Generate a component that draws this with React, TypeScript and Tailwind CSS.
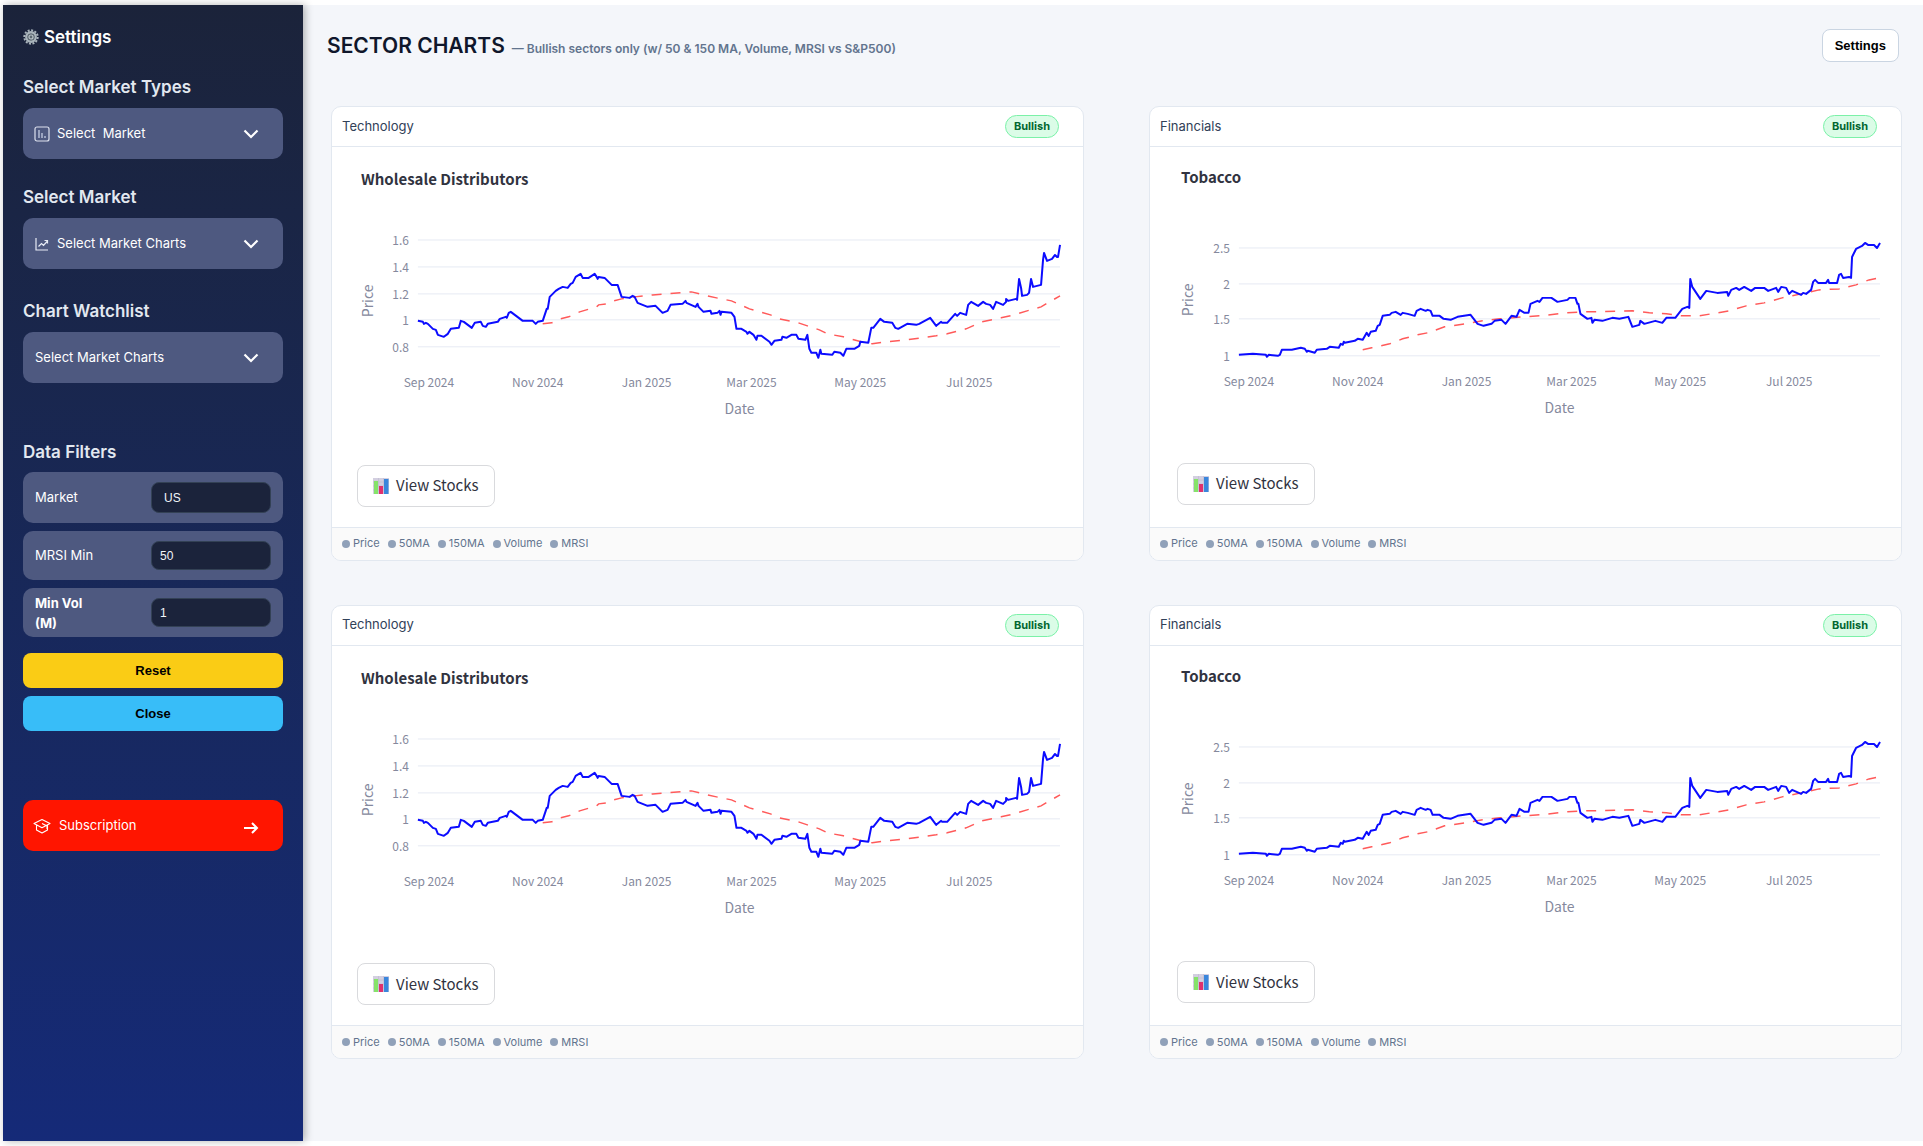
import React from "react";

type Pt = [number, number];
type Series = {
  title: string;
  sector: string;
  titleClass: string;
  buttonClass: string;
  ticks: { label: string; y: number }[];
  priceX: number;
  priceY: number;
  monthY: number;
  dateX: number;
  left: number;
  right: number;
  price: Pt[];
  ma: Pt[];
};

const WHOLESALE: Series = {
  title: "Wholesale Distributors",
  sector: "Technology",
  titleClass: "pt-5 pl-[29px]",
  buttonClass: "mt-7 mb-5 ml-[25px]",
  ticks: [
    { label: "1.6", y: 93 },
    { label: "1.4", y: 120 },
    { label: "1.2", y: 147 },
    { label: "1", y: 173 },
    { label: "0.8", y: 200 },
  ],
  priceX: 41,
  priceY: 154,
  monthY: 240,
  dateX: 408,
  left: 86,
  right: 729,
  price: [[86,174],[91,175],[92,177],[94,176],[96,177],[101,182],[104,183],[106,188],[112,190],[116,187],[119,182],[127,181],[129,174],[132,175],[140,181],[143,176],[149,175],[151,179],[154,180],[156,177],[166,175],[168,172],[174,170],[175,171],[177,166],[179,165],[191,174],[201,174],[204,177],[206,175],[211,174],[215,162],[216,162],[218,150],[224,144],[227,142],[231,140],[236,141],[239,137],[241,136],[244,130],[249,127],[251,131],[257,131],[263,127],[265,130],[266,132],[267,130],[273,131],[280,138],[286,138],[290,150],[298,151],[301,149],[303,150],[306,156],[316,160],[324,159],[331,166],[336,164],[339,158],[351,157],[354,154],[355,156],[364,160],[366,157],[367,160],[372,165],[379,164],[380,167],[386,166],[388,164],[389,168],[390,165],[400,166],[403,170],[405,182],[410,182],[415,185],[416,187],[418,185],[422,188],[425,193],[426,189],[430,189],[438,195],[440,198],[443,194],[450,193],[451,190],[455,191],[460,188],[465,188],[467,192],[474,193],[476,188],[478,202],[480,206],[485,206],[487,211],[489,203],[490,207],[501,208],[503,205],[509,206],[512,209],[515,202],[523,202],[528,199],[529,195],[537,196],[540,181],[542,181],[549,172],[553,175],[561,176],[564,181],[567,182],[576,177],[585,178],[588,177],[599,171],[605,179],[610,175],[611,176],[616,176],[624,167],[626,169],[629,166],[635,168],[637,158],[640,155],[647,159],[652,155],[655,157],[659,158],[662,162],[665,155],[672,158],[675,155],[675,152],[677,154],[685,152],[686,153],[688,132],[690,141],[691,149],[696,148],[698,146],[700,132],[702,140],[710,138],[712,113],[713,106],[716,114],[721,112],[724,108],[726,110],[727,110],[729,98]],
  ma: [[211,177],[220,176],[229,172],[237,170],[248,165],[265,160],[267,158],[275,157],[282,154],[290,152],[303,150],[321,148],[360,145],[368,147],[376,149],[385,151],[400,154],[418,162],[439,168],[448,172],[467,176],[476,179],[488,183],[496,187],[512,190],[530,195],[541,197],[555,195],[576,193],[605,189],[616,187],[635,182],[651,175],[670,171],[683,168],[696,164],[710,160],[715,157],[729,149]],
};

const TOBACCO: Series = {
  title: "Tobacco",
  sector: "Financials",
  titleClass: "pt-[18px] pl-[31px]",
  buttonClass: "mt-[26px] mb-[22px] ml-[27px]",
  ticks: [
    { label: "2.5", y: 101 },
    { label: "2", y: 137 },
    { label: "1.5", y: 172 },
    { label: "1", y: 209 },
  ],
  priceX: 43,
  priceY: 153,
  monthY: 239,
  dateX: 410,
  left: 89,
  right: 731,
  price: [[89,208],[103,207],[116,208],[117,210],[119,208],[128,209],[130,208],[132,203],[142,203],[151,201],[155,202],[157,205],[158,204],[165,206],[167,203],[177,202],[180,200],[189,201],[191,197],[193,198],[194,195],[195,196],[205,194],[208,192],[213,193],[217,186],[219,189],[221,185],[226,184],[228,179],[230,178],[233,169],[240,168],[242,166],[246,165],[251,168],[253,166],[258,167],[265,169],[267,164],[271,162],[276,164],[278,163],[281,164],[283,169],[290,169],[294,172],[301,173],[308,170],[321,168],[328,177],[334,179],[342,177],[345,174],[352,173],[356,177],[362,169],[367,170],[370,163],[375,166],[379,166],[381,157],[388,154],[390,155],[393,151],[402,151],[408,155],[418,153],[420,151],[426,151],[428,157],[429,157],[431,167],[438,172],[442,171],[443,176],[445,173],[453,174],[463,171],[470,172],[479,170],[483,180],[490,178],[491,174],[495,177],[506,174],[513,176],[517,171],[526,171],[533,162],[538,160],[540,161],[541,132],[543,140],[551,152],[557,144],[568,146],[578,145],[579,149],[582,143],[587,141],[590,143],[595,140],[602,144],[606,141],[615,141],[619,144],[627,141],[629,145],[632,140],[637,141],[640,147],[643,144],[652,148],[654,146],[657,147],[662,143],[664,135],[666,133],[669,136],[677,136],[679,133],[680,136],[688,136],[690,128],[692,127],[694,131],[700,130],[702,131],[703,110],[707,102],[713,99],[716,96],[719,98],[725,98],[728,101],[731,96]],
  ma: [[213,203],[222,201],[240,197],[253,192],[268,188],[278,186],[295,180],[315,177],[333,174],[350,172],[373,170],[390,169],[418,166],[437,165],[483,164],[500,166],[517,167],[533,169],[550,169],[580,164],[597,159],[615,156],[633,151],[652,147],[670,143],[690,142],[707,138],[720,133],[730,131]],
};

const MONTHS: [string, number][] = [
  ["Sep 2024", 97], ["Nov 2024", 206], ["Jan 2025", 315],
  ["Mar 2025", 420], ["May 2025", 529], ["Jul 2025", 638],
];

const toPoints = (pts: Pt[]) => pts.map((p) => p.join(",")).join(" ");

function Chart({ s }: { s: Series }) {
  return (
    <svg viewBox="0 60 752 230" className="block w-full" role="img" aria-label={`${s.title} price chart`}>
      {s.ticks.map((t) => (
        <g key={t.label}>
          <line x1={s.left} x2={s.right} y1={t.y} y2={t.y} stroke="#e6eaf3" strokeWidth="1" />
          <text x={s.left - 9} y={t.y + 5} textAnchor="end" fontSize="12" fill="#85899d">{t.label}</text>
        </g>
      ))}
      <text x={s.priceX} y={s.priceY} textAnchor="middle" fontSize="14" fill="#85899d" transform={`rotate(-90 ${s.priceX} ${s.priceY})`}>Price</text>
      {MONTHS.map(([m, x]) => (
        <text key={m} x={x + s.dateX - 408} y={s.monthY} textAnchor="middle" fontSize="12" fill="#85899d">{m}</text>
      ))}
      <text x={s.dateX} y={s.monthY + 27} textAnchor="middle" fontSize="14" fill="#85899d">Date</text>
      <polyline points={toPoints(s.ma)} fill="none" stroke="#ff5a5a" strokeWidth="1.5" strokeDasharray="10 9" />
      <polyline points={toPoints(s.price)} fill="none" stroke="#0c0cff" strokeWidth="2" strokeLinejoin="round" />
    </svg>
  );
}

function BarsEmoji() {
  return (
    <svg viewBox="0 0 16 16" className="size-4" aria-hidden="true">
      <rect width="16" height="16" fill="#d3cfe0" />
      <path d="M0 4h16M0 8h16M0 12h16M5.5 0v16M10.5 0v16" stroke="#bdb8cf" strokeWidth=".6" />
      <rect x="1" y="3" width="4" height="13" fill="#86e36a" />
      <rect x="6" y="8" width="4" height="8" fill="#e0306e" />
      <rect x="11" y="1" width="4.5" height="15" fill="#3a86dc" />
    </svg>
  );
}

function Gear() {
  return (
    <svg viewBox="0 0 16 16" className="size-4" aria-hidden="true" fill="none">
      <circle cx="8" cy="8" r="6.7" stroke="#a9b4bb" strokeWidth="2" strokeDasharray="2 1.5" />
      <circle cx="8" cy="8" r="4.6" stroke="#a9b4bb" strokeWidth="2.6" />
      <circle cx="8" cy="8" r="3.6" fill="#5c6870" />
      <circle cx="8" cy="8" r="2" stroke="#b9c3c9" strokeWidth="1.2" />
    </svg>
  );
}

function MarketIcon() {
  return (
    <svg viewBox="0 0 16 16" className="size-4" aria-hidden="true" fill="none" stroke="#dde2ee">
      <rect x="1" y="1" width="14" height="14" rx="2" strokeWidth="1.2" />
      <path d="M5 4v8M8 7v5M11 10v2" strokeWidth="1.6" stroke="#aeb7d0" />
    </svg>
  );
}

function TrendIcon() {
  return (
    <svg viewBox="0 0 16 16" className="size-4" aria-hidden="true" fill="none" stroke="#e8ecf5" strokeWidth="1.2">
      <path d="M2 2v12h12M4.500 10.500l3-3 2 2 4-4.500M10.500 4.500h3v3" />
    </svg>
  );
}

function CapIcon() {
  return (
    <svg viewBox="0 0 18 16" className="h-4 w-[18px]" aria-hidden="true" fill="none" stroke="white" strokeWidth="1.1" strokeLinejoin="round">
      <path d="M1 5.500 9 1.500l8 4-8 4.300zM3.500 7v5L9 15l5.500-3V7M9 5.500l5 2.500v3" />
    </svg>
  );
}

function Dropdown({ id, title, text, icon }: { id: string; title: string; text: string; icon?: React.ReactNode }) {
  return (
    <div>
      <label htmlFor={id} className="block text-[17px] leading-6 font-semibold text-slate-200">{title}</label>
      <div className="relative mt-[9px] h-[51px]">
        <select
          id={id}
          className={`h-full w-full appearance-none rounded-[10px] bg-[#4e5980] pr-12 text-[13px] text-white ${icon ? "pl-[34px]" : "pl-3"}`}
        >
          <option>{text}</option>
        </select>
        {icon && <span className="pointer-events-none absolute inset-y-0 left-[11px] flex items-center">{icon}</span>}
        <span className="pointer-events-none absolute inset-y-0 right-6 flex items-center">
          <svg viewBox="0 0 16 16" className="size-4" fill="none" stroke="white" strokeWidth="2.2" aria-hidden="true">
            <path d="M1.500 4.500 8 11l6.500-6.500" />
          </svg>
        </span>
      </div>
    </div>
  );
}

function Filter({ id, label, value, rowClass, inputClass }: { id: string; label: string; value: string; rowClass: string; inputClass: string }) {
  return (
    <div className={`flex items-center justify-between rounded-[10px] bg-[#4e5980] px-3 text-white ${rowClass}`}>
      <label htmlFor={id} className="w-16 whitespace-normal">{label}</label>
      <input
        id={id}
        defaultValue={value}
        className={`w-[120px] rounded-lg border border-[#334155] bg-[#1b233b] font-['Liberation_Sans',sans-serif] text-xs font-normal text-slate-100 ${inputClass}`}
      />
    </div>
  );
}

function Sidebar() {
  return (
    <aside className="relative z-10 w-[300px] shrink-0 bg-linear-to-b from-[#1b233a] to-[#152a78] px-5 pt-5 shadow-[2px_0_8px_rgba(0,0,0,0.3)]">
      <h2 className="flex items-center gap-[5px] text-[17px] leading-6 font-semibold text-white"><Gear />Settings</h2>
      <div className="mt-[26px] flex flex-col gap-[26px]">
        <Dropdown id="market-types" title="Select Market Types" text={"Select\u00a0 Market"} icon={<MarketIcon />} />
        <Dropdown id="market" title="Select Market" text="Select Market Charts" icon={<TrendIcon />} />
      </div>
      <div className="mt-[30px]">
        <Dropdown id="watchlist" title="Chart Watchlist" text="Select Market Charts" />
      </div>
      <h3 className="mt-[57px] text-[17px] leading-6 font-semibold text-slate-200">Data Filters</h3>
      <div className="mt-2 flex flex-col gap-2">
        <Filter id="f-market" label="Market" value="US" rowClass="h-[51px] text-[13px]" inputClass="h-[31px] px-3" />
        <Filter id="f-mrsi" label="MRSI Min" value="50" rowClass="h-[49px] text-[13px]" inputClass="h-[29px] px-2" />
        <Filter id="f-vol" label="Min Vol (M)" value="1" rowClass="h-[49px] text-[13px] leading-5 font-bold" inputClass="h-[29px] px-2" />
      </div>
      <div className="mt-4 flex flex-col gap-2 font-['Liberation_Sans',sans-serif] text-[13px] font-bold text-black">
        <button className="h-[35px] rounded-lg bg-[#facc15]">Reset</button>
        <button className="h-[35px] rounded-lg bg-[#38bdf8]">Close</button>
      </div>
      <button className="mt-[69px] flex h-[51px] w-full items-center rounded-[10px] bg-[#ff1500] pr-6 pl-[10px] text-[13px] text-white">
        <CapIcon />
        <span className="ml-2 flex-1 text-left">Subscription</span>
        <svg viewBox="0 0 16 16" className="mt-1 size-4" fill="none" stroke="white" strokeWidth="2" aria-hidden="true">
          <path d="M1 8h13M9 3l5 5-5 5" />
        </svg>
      </button>
    </aside>
  );
}

function Card({ s }: { s: Series }) {
  return (
    <article className="overflow-hidden rounded-[10px] border border-slate-200 bg-white">
      <header className="flex h-10 items-center justify-between border-b border-slate-200 pr-6 pl-[10px]">
        <h2 className="text-[13px] text-slate-700">{s.sector}</h2>
        <span className="rounded-full border border-green-300 bg-green-100 px-2 text-[11px] leading-[21px] font-bold text-green-800">Bullish</span>
      </header>
      <div className="flow-root font-['Noto_Sans_CJK_SC',sans-serif]">
        <h3 className={`h-[60px] text-[15px] leading-6 font-bold text-[#31333f] ${s.titleClass}`}>{s.title}</h3>
        <Chart s={s} />
        <button className={`flex h-[42px] items-center gap-[7px] rounded-lg border border-[#d9dadd] px-[15px] text-[15px] text-[#31333f] ${s.buttonClass}`}>
          <BarsEmoji />View Stocks
        </button>
      </div>
      <footer className="flex h-[33px] items-center gap-2 border-t border-slate-200 bg-[#fafafa] px-[10px] text-[11px] text-slate-500">
        {["Price", "50MA", "150MA", "Volume", "MRSI"].map((l) => (
          <span key={l} className="flex items-center gap-[3px]">
            <span className="size-2 rounded-full bg-slate-400" />{l}
          </span>
        ))}
      </footer>
    </article>
  );
}

export default function App() {
  return (
    <div className="flex min-h-screen bg-white pt-[5px] pb-[5px] pl-[3px] font-['Inter',sans-serif]">
      <Sidebar />
      <main className="flex-1 bg-[#f4f6fa] pt-6 pb-20">
        <header className="flex items-center justify-between pr-6 pl-6">
          <h1 className="flex items-baseline gap-[7px] text-[21px] leading-8 font-semibold text-slate-900">
            SECTOR CHARTS <span className="text-xs text-slate-500">— Bullish sectors only (w/ 50 &amp; 150 MA, Volume, MRSI vs S&amp;P500)</span>
          </h1>
          <button className="h-[33px] rounded-lg border border-slate-300 bg-white px-3 font-['Liberation_Sans',sans-serif] text-[13px] font-bold text-black">Settings</button>
        </header>
        <section className="mt-11 grid grid-cols-2 gap-x-[65px] gap-y-[44px] pr-[21px] pl-7">
          <Card s={WHOLESALE} />
          <Card s={TOBACCO} />
          <Card s={WHOLESALE} />
          <Card s={TOBACCO} />
        </section>
      </main>
    </div>
  );
}
